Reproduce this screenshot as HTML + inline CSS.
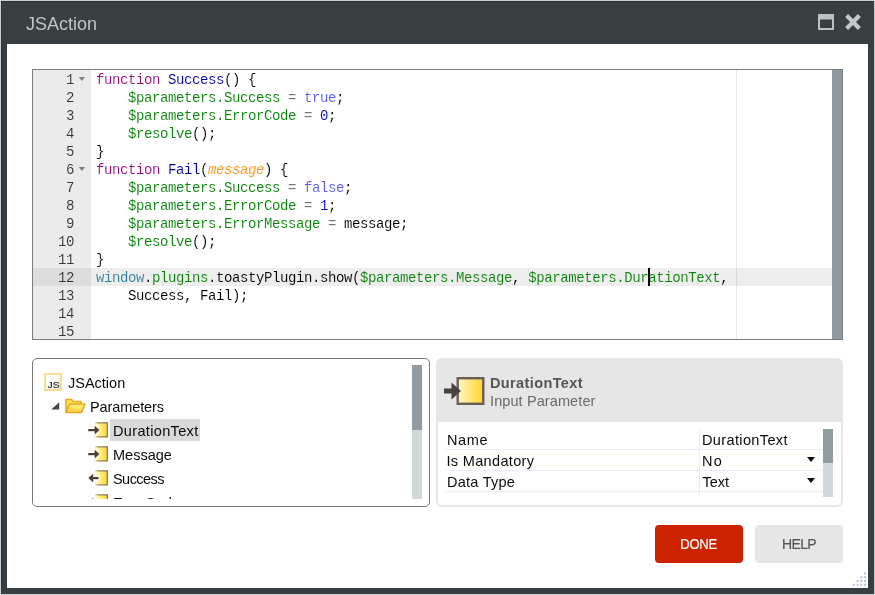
<!DOCTYPE html>
<html>
<head>
<meta charset="utf-8">
<title>JSAction</title>
<style>
html,body{margin:0;padding:0;}
body{width:875px;height:595px;overflow:hidden;background:#383f41;font-family:"Liberation Sans",sans-serif;position:relative;}
.abs{position:absolute;}
#frame{left:0;top:0;width:873px;height:593px;border:1px solid #c9d1d3;background:#383f41;box-shadow:inset 1px 1px 0 #2e3537;}
#content{left:7px;top:44px;width:861px;height:544px;background:#fff;}
#title{left:26px;top:13px;font-size:18px;color:#c0c5c6;line-height:22px;letter-spacing:0;white-space:nowrap;}
/* editor */
#editor{left:32px;top:69px;width:809px;height:269px;border:1px solid #7d7d7d;background:#fff;overflow:hidden;}
#gutter{left:0;top:0;width:58px;height:269px;background:#ebebeb;}
.ln{position:absolute;left:0;width:41px;margin-top:1px;text-align:right;height:18px;line-height:18px;font-family:"Liberation Mono",monospace;font-size:14px;letter-spacing:-0.4px;color:#333;-webkit-text-stroke:0.08px #ebebeb;}
.fold{position:absolute;left:46.6px;width:0;height:0;border-left:2.8px solid transparent;border-right:2.8px solid transparent;border-top:3.4px solid #8a8a8a;}
#active{left:58px;top:198px;width:741px;height:18px;background:rgba(0,0,0,0.072);}
#gactive{left:0;top:198px;width:58px;height:18px;background:#dcdcdc;}
#pm{left:703px;top:0;width:1px;height:269px;background:#e8e8e8;}
#vsb{left:799px;top:0;width:10px;height:269px;background:#8e9aa0;}
#code{left:63px;top:1px;margin:0;font-family:"Liberation Mono",monospace;font-size:14px;letter-spacing:-0.4px;line-height:18px;color:#000;white-space:pre;-webkit-text-stroke:0.08px #fff;}
#cursor{left:615px;top:198px;width:2px;height:18px;background:#000;}
.k{color:#930f80}.f{color:#0000a2}.g{color:#0a820a}.c{color:#585cf6}.n{color:#0000cd}.p{color:#fd971f;font-style:italic;-webkit-text-stroke-width:0.05px}.o{color:#687687}.w{color:#318495}
/* tree */
#tree{left:32px;top:358px;width:396px;height:147px;border:1px solid #787878;border-radius:5px;background:#fff;}
#treeclip{left:0;top:0;width:378px;height:140px;overflow:hidden;}
.tr{position:absolute;font-size:14.5px;line-height:22px;height:22px;color:#0c0c0c;white-space:nowrap;letter-spacing:-0.2px;}
#tsb{left:379px;top:6px;width:10px;height:134px;background:#d0d8da;}
#tsbt{left:0;top:0;width:10px;height:65px;background:#909ca0;}
/* props */
#props{left:436px;top:358px;width:407px;height:149px;background:#e6e6e6;border-radius:6px;}
#pbody{left:2px;top:64px;width:403px;height:83px;background:#fff;border-radius:0 0 4px 4px;}
.pl{position:absolute;font-size:14.5px;line-height:21px;color:#0c0c0c;white-space:nowrap;letter-spacing:-0.2px;}
.hl{position:absolute;height:1px;background:#e4eff9;left:7px;width:378px;}
/* buttons */
.btn{position:absolute;top:525px;width:88px;height:38px;border-radius:4px;text-align:center;line-height:38px;font-size:14px;letter-spacing:-0.7px;-webkit-text-stroke:0.15px currentColor;}
</style>
</head>
<body>
<div id="wrap" style="position:absolute;left:0;top:0;width:875px;height:595px;will-change:transform">
<svg width="0" height="0" style="position:absolute"><defs>
<linearGradient id="gy" x1="0" y1="0" x2="1" y2="0"><stop offset="0" stop-color="#fff8cc"/><stop offset="1" stop-color="#ffd628"/></linearGradient>
<linearGradient id="gj" x1="0" y1="0" x2="1" y2="1"><stop offset="0.3" stop-color="#ffffff"/><stop offset="1" stop-color="#e6e6ee"/></linearGradient>
<linearGradient id="gf" x1="0" y1="0" x2="0" y2="1"><stop offset="0" stop-color="#fff585"/><stop offset="1" stop-color="#ffcd3a"/></linearGradient>
<linearGradient id="gy2" x1="0" y1="0" x2="1" y2="0"><stop offset="0" stop-color="#fffdf0"/><stop offset="0.45" stop-color="#ffec8a"/><stop offset="1" stop-color="#ffd326"/></linearGradient>
<linearGradient id="gs" x1="0" y1="0" x2="1" y2="0"><stop offset="0" stop-color="#9a8860" stop-opacity="0"/><stop offset="0.3" stop-color="#9a8860" stop-opacity="0.95"/><stop offset="1" stop-color="#85744f"/></linearGradient>
</defs></svg>
<div id="frame" class="abs"></div>
<div id="content" class="abs"></div>
<div id="title" class="abs">JSAction</div>
<svg class="abs" style="left:818px;top:14px" width="16" height="16" viewBox="0 0 16 16"><rect x="1" y="1" width="14" height="14" fill="none" stroke="#bac1c2" stroke-width="2"/><rect x="0" y="0" width="16" height="5.5" fill="#bac1c2"/></svg>
<svg class="abs" style="left:845px;top:14px" width="16" height="16" viewBox="0 0 16 16"><path d="M1.6 1.6 L14.4 14.4 M14.4 1.6 L1.6 14.4" stroke="#c3c8c9" stroke-width="4.2" fill="none"/></svg>

<div id="editor" class="abs">
  <div id="gutter" class="abs">
    <div id="gactive" class="abs"></div>
    <div class="ln" style="top:0px">1</div><div class="ln" style="top:18px">2</div><div class="ln" style="top:36px">3</div><div class="ln" style="top:54px">4</div><div class="ln" style="top:72px">5</div><div class="ln" style="top:90px">6</div><div class="ln" style="top:108px">7</div><div class="ln" style="top:126px">8</div><div class="ln" style="top:144px">9</div><div class="ln" style="top:162px">10</div><div class="ln" style="top:180px">11</div><div class="ln" style="top:198px;-webkit-text-stroke-color:#dcdcdc">12</div><div class="ln" style="top:216px">13</div><div class="ln" style="top:234px">14</div><div class="ln" style="top:252px">15</div><svg class="abs" style="left:45px;top:6px" width="8" height="6" viewBox="0 0 8 6"><path d="M0.7 0.9 H7.1 L3.9 5 Z" fill="#7f7f7f"/></svg><svg class="abs" style="left:45px;top:96px" width="8" height="6" viewBox="0 0 8 6"><path d="M0.7 0.9 H7.1 L3.9 5 Z" fill="#7f7f7f"/></svg>
  </div>
  <div id="pm" class="abs"></div>
  <div id="active" class="abs"></div>
  <pre id="code" class="abs"><span class="k">function</span> <span class="f">Success</span>() {
    <span class="g">$parameters.Success</span> <span class="o">=</span> <span class="c">true</span>;
    <span class="g">$parameters.ErrorCode</span> <span class="o">=</span> <span class="n">0</span>;
    <span class="g">$resolve</span>();
}
<span class="k">function</span> <span class="f">Fail</span>(<span class="p">message</span>) {
    <span class="g">$parameters.Success</span> <span class="o">=</span> <span class="c">false</span>;
    <span class="g">$parameters.ErrorCode</span> <span class="o">=</span> <span class="n">1</span>;
    <span class="g">$parameters.ErrorMessage</span> <span class="o">=</span> message;
    <span class="g">$resolve</span>();
}
<span style="-webkit-text-stroke-color:#ededed"><span class="w">window</span>.<span class="g">plugins</span>.toastyPlugin.show(<span class="g">$parameters.Message</span>, <span class="g">$parameters.DurationText</span>,</span>
    Success, Fail);
</pre>
  <div id="cursor" class="abs"></div>
  <div id="vsb" class="abs"></div>
</div>

<div id="tree" class="abs">
  <div id="treeclip" class="abs">
    <svg class="abs" style="left:11px;top:14px" width="18" height="18" viewBox="0 0 18 18"><rect x="1" y="1" width="16" height="16" fill="url(#gj)" stroke="#f8d26c" stroke-width="1.5"/><text x="3.6" y="14.9" font-family="Liberation Sans, sans-serif" font-size="8.4" textLength="12.2" lengthAdjust="spacingAndGlyphs" fill="#2a2a2a" stroke="#2a2a2a" stroke-width="0.1">JS</text></svg>
    <div class="tr" style="left:35px;top:13px;letter-spacing:0">JSAction</div>
    <svg class="abs" style="left:18px;top:43px" width="9" height="8" viewBox="0 0 9 8"><path d="M8.2 0.2 V7.6 H0.2 Z" fill="#454545"/></svg>
    <svg class="abs" style="left:32px;top:39px" width="21" height="16" viewBox="0 0 21 16"><path d="M1 14.5 V1.5 H6.5 L8 3.5 H16 V6" fill="#fde561" stroke="#e6a81c" stroke-width="1.6" stroke-linejoin="round"/><path d="M1 14.5 L4.5 6 H20 L16.5 14.5 Z" fill="url(#gf)" stroke="#e6a81c" stroke-width="1.6" stroke-linejoin="round"/></svg>
    <div class="tr" style="left:57px;top:37px;letter-spacing:-0.1px">Parameters</div>
    <div class="abs" style="left:77px;top:60px;width:90px;height:22px;background:#d9d9d9"></div>
    <svg class="abs" style="left:55px;top:63px" width="20" height="16" viewBox="0 0 20 16"><rect x="6.2" y="0.5" width="13.5" height="14.7" fill="url(#gy2)"/><path d="M6.2 0.9 H19.3 V14.8 H6.2" fill="none" stroke="url(#gs)" stroke-width="1.2"/><path d="M0.2 8.1 H8" stroke="#4a3f3b" stroke-width="2.2" fill="none"/><path d="M6.6 3.7 L11.4 8.1 L6.6 12.5 Z" fill="#4a3f3b"/></svg>
    <div class="tr" style="left:80px;top:61px;letter-spacing:0.35px;-webkit-text-stroke-color:#d9d9d9">DurationText</div>
    <svg class="abs" style="left:55px;top:87px" width="20" height="16" viewBox="0 0 20 16"><rect x="6.2" y="0.5" width="13.5" height="14.7" fill="url(#gy2)"/><path d="M6.2 0.9 H19.3 V14.8 H6.2" fill="none" stroke="url(#gs)" stroke-width="1.2"/><path d="M0.2 8.1 H8" stroke="#4a3f3b" stroke-width="2.2" fill="none"/><path d="M6.6 3.7 L11.4 8.1 L6.6 12.5 Z" fill="#4a3f3b"/></svg>
    <div class="tr" style="left:80px;top:85px;letter-spacing:0">Message</div>
    <svg class="abs" style="left:55px;top:111px" width="20" height="16" viewBox="0 0 20 16"><rect x="6.2" y="0.5" width="13.5" height="14.7" fill="url(#gy2)"/><path d="M6.2 0.9 H19.3 V14.8 H6.2" fill="none" stroke="url(#gs)" stroke-width="1.2"/><rect x="4.5" y="5.6" width="7" height="5" fill="#fff" opacity="0.85"/><path d="M3 8.1 H10.6" stroke="#4a3f3b" stroke-width="2.2" fill="none"/><path d="M5.2 3.7 L0.3 8.1 L5.2 12.5 Z" fill="#4a3f3b"/></svg>
    <div class="tr" style="left:80px;top:109px;letter-spacing:-0.55px">Success</div>
    <svg class="abs" style="left:55px;top:135px" width="20" height="16" viewBox="0 0 20 16"><rect x="6.2" y="0.5" width="13.5" height="14.7" fill="url(#gy2)"/><path d="M6.2 0.9 H19.3 V14.8 H6.2" fill="none" stroke="url(#gs)" stroke-width="1.2"/><rect x="4.5" y="5.6" width="7" height="5" fill="#fff" opacity="0.85"/><path d="M3 8.1 H10.6" stroke="#4a3f3b" stroke-width="2.2" fill="none"/><path d="M5.2 3.7 L0.3 8.1 L5.2 12.5 Z" fill="#4a3f3b"/></svg>
    <div class="tr" style="left:80px;top:133px;letter-spacing:0">ErrorCode</div>
  </div>
  <div id="tsb" class="abs"><div id="tsbt" class="abs"></div></div>
</div>

<div id="props" class="abs">
  <svg class="abs" style="left:8px;top:19px" width="41" height="29" viewBox="0 0 41 29"><rect x="13.7" y="1.2" width="25.6" height="25.6" fill="url(#gy)" stroke="#6a5e55" stroke-width="2.4"/><path d="M0 14 H10" stroke="#4a403e" stroke-width="5" fill="none"/><path d="M7.5 5.5 L17 14 L7.5 22.5 Z" fill="#4a403e"/></svg>
  <div class="abs" style="left:54px;top:15px;font-size:14.5px;font-weight:bold;color:#555;line-height:20px;white-space:nowrap;letter-spacing:0.38px">DurationText</div>
  <div class="abs" style="left:54px;top:33px;font-size:14.5px;color:#6a6a6a;line-height:20px;white-space:nowrap;letter-spacing:0.1px">Input Parameter</div>
  <div id="pbody" class="abs">
    <div id="pclip" class="abs" style="left:0;top:7px;width:396px;height:68px;overflow:hidden">
      <div class="pl" style="left:9px;top:1px;letter-spacing:0.6px">Name</div>
      <div class="pl" style="left:8.5px;top:22px;letter-spacing:0.33px">Is Mandatory</div>
      <div class="pl" style="left:9px;top:43px;letter-spacing:0.26px">Data Type</div>
      <div class="pl" style="left:264px;top:1px;letter-spacing:0.37px">DurationText</div>
      <div class="pl" style="left:264px;top:22px;letter-spacing:1.4px">No</div>
      <div class="pl" style="left:264.5px;top:43px;letter-spacing:0">Text</div>
      <div class="hl" style="top:20px"></div><div class="hl" style="top:41px"></div><div class="hl" style="top:62px"></div>
      <div class="abs" style="left:261px;top:0;width:1px;height:68px;background:#e4eff9"></div>
      <svg class="abs" style="left:369px;top:28px" width="8" height="5" viewBox="0 0 8 5"><path d="M0 0 H8 L4 5 Z" fill="#111"/></svg>
      <svg class="abs" style="left:369px;top:49px" width="8" height="5" viewBox="0 0 8 5"><path d="M0 0 H8 L4 5 Z" fill="#111"/></svg>
      <div class="abs" style="left:385px;top:0;width:10px;height:68px;background:#d0d8da"></div>
      <div class="abs" style="left:385px;top:0;width:10px;height:34px;background:#909ca0"></div>
    </div>
  </div>
</div>

<svg class="abs" style="left:845px;top:565px" width="23" height="23" viewBox="0 0 23 23" fill="#bcc3d6"><rect x="19.0" y="7.4" width="2" height="2.1"/><rect x="15.3" y="11.2" width="2" height="2.1"/><rect x="19.0" y="11.2" width="2" height="2.1"/><rect x="11.6" y="14.9" width="2" height="2.1"/><rect x="15.3" y="14.9" width="2" height="2.1"/><rect x="19.0" y="14.9" width="2" height="2.1"/><rect x="7.9" y="18.7" width="2" height="2.1"/><rect x="11.6" y="18.7" width="2" height="2.1"/><rect x="15.3" y="18.7" width="2" height="2.1"/><rect x="19.0" y="18.7" width="2" height="2.1"/></svg>
<div class="btn" style="left:655px;background:#cc2200;color:#fff;letter-spacing:-0.3px"><span style="display:inline-block;transform:scaleX(0.93);transform-origin:50% 50%">DONE</span></div>
<div class="btn" style="left:755px;background:#e6e6e6;color:#555;">HELP</div>
</div>
</body>
</html>
